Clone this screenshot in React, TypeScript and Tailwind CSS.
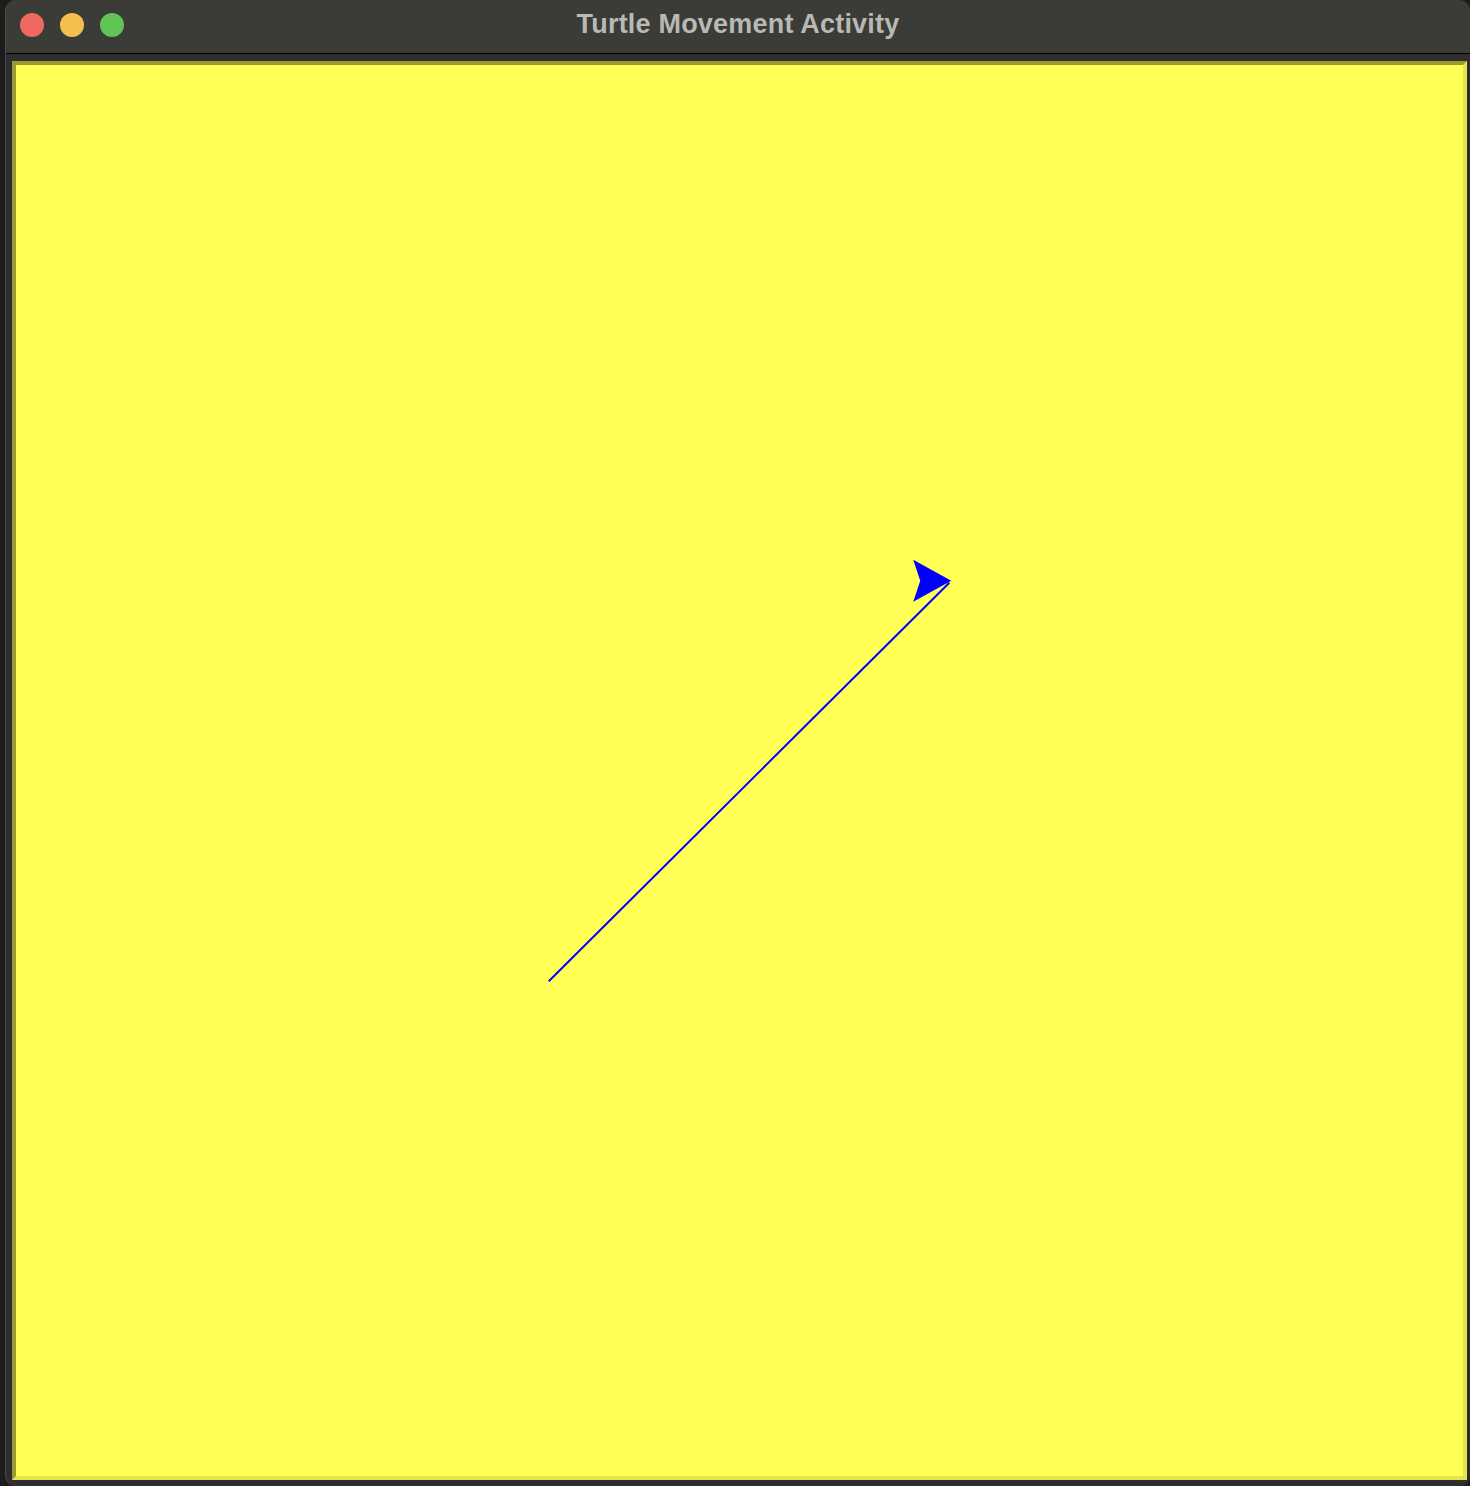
export default function App() {
  return (
    <div className="w-[1470px] h-[1486px] bg-[#1c1c1c] flex pl-[5px] overflow-hidden">
      {/* Window */}
      <div className="flex-1 flex flex-col rounded-[11px] overflow-hidden border-l border-[#4a4a4a] bg-[#2e2e2e]">
        {/* Title bar */}
        <div className="relative h-[54px] shrink-0 bg-[#3b3b37] border-b border-black flex items-center justify-center">
          <div className="absolute left-[14px] top-[13px] flex gap-4">
            <span className="w-6 h-6 rounded-full bg-[#ee6a5f]" />
            <span className="w-6 h-6 rounded-full bg-[#f5bf4f]" />
            <span className="w-6 h-6 rounded-full bg-[#61c554]" />
          </div>
          <span className="text-[27px] font-bold tracking-[0.2px] text-[#b9b9b3] font-['Liberation_Sans',sans-serif] -mt-1">
            Turtle Movement Activity
          </span>
        </div>

        {/* Body */}
        <div className="flex-1 flex pl-[6px] pt-[7px] pr-[3px] pb-[7px]">
          <div className="flex-1 border-4 border-t-[#9a9a33] border-l-[#9a9a33] border-b-[#e5e54b] border-r-[#e5e54b] bg-[#ffff55]">
            <svg className="w-full h-full block" viewBox="0 0 1445 1409" width="1445" height="1409">
              <line x1="532" y1="915" x2="932" y2="517" stroke="#0000ff" strokeWidth="2" />
              <polygon points="934,515 896,494 903,515 896,536" fill="#0000ff" />
            </svg>
          </div>
        </div>
      </div>
    </div>
  );
}
